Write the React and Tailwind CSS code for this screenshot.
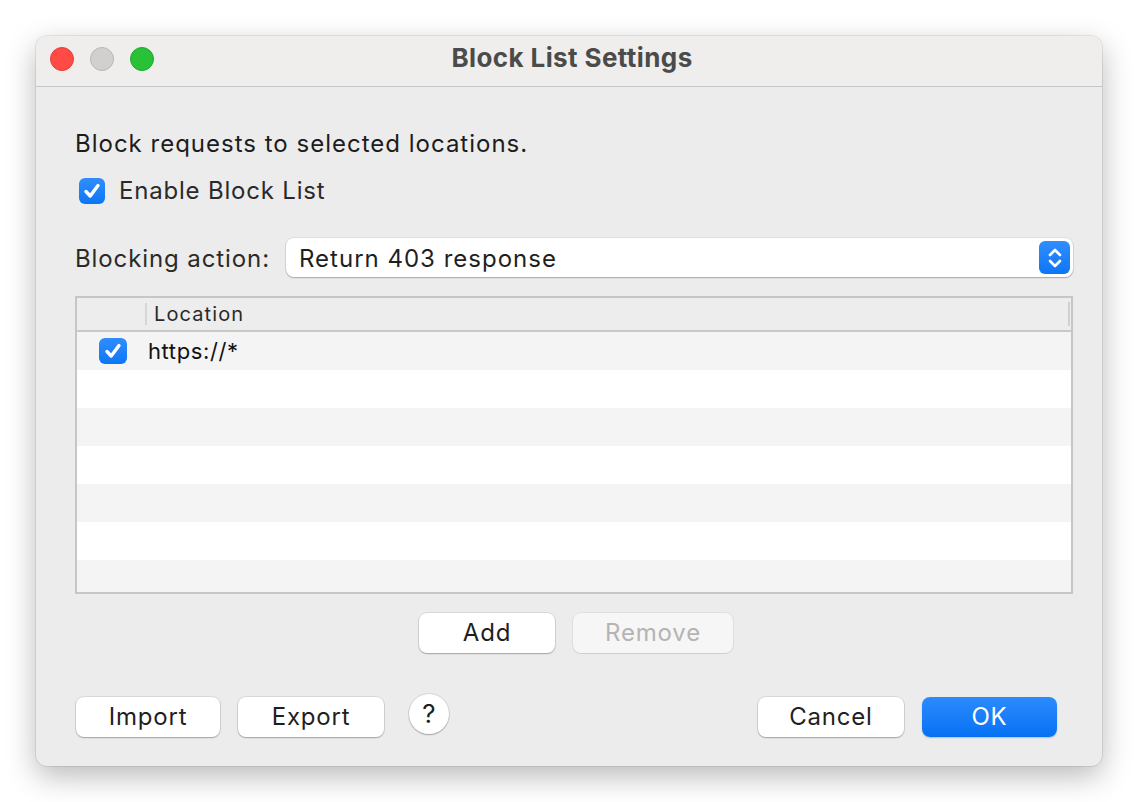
const font = { fontFamily: 'Inter, "Noto Sans", sans-serif' }

function MacButton({ children, className = '', disabled = false }) {
  return (
    <button
      className={`h-[40px] rounded-[8px] text-[24px] leading-none tracking-[0.8px] ${
        disabled
          ? 'bg-[#f6f6f6] text-[#b4b4b4] shadow-[0_0_0_1px_rgba(0,0,0,0.05),0_1px_1px_rgba(0,0,0,0.08)]'
          : 'bg-white text-[#1f1f1f] shadow-[0_0_0_1px_rgba(0,0,0,0.08),0_1px_1.5px_rgba(0,0,0,0.25)]'
      } ${className}`}
    >
      {children}
    </button>
  )
}

function BlueCheck({ className = '' }) {
  return (
    <div className={`flex items-center justify-center rounded-[6px] bg-gradient-to-b from-[#2f8dff] to-[#0a76f5] ${className}`}>
      <svg width="22" height="22" viewBox="0 0 22 22" fill="none" stroke="white" strokeWidth="3.4" strokeLinecap="round" strokeLinejoin="round">
        <path d="M5 11.5 L9.2 16 L17 5.5" />
      </svg>
    </div>
  )
}

export default function App() {
  const rows = [0, 1, 2, 3, 4, 5, 6]

  return (
    <div className="w-[1138px] h-[802px] bg-white pt-[36px] pl-[36px]" style={font}>
      <div className="w-[1066px] h-[730px] rounded-[11px] overflow-hidden bg-[#ececec] shadow-[0_10px_30px_rgba(0,0,0,0.28),0_0_0_1px_rgba(0,0,0,0.08)]">
        {/* title bar */}
        <div className="h-[51px] bg-[#efeeec] border-b border-[#c6c6c6] grid grid-cols-[1fr_auto_1fr] items-center">
          <div className="flex items-center gap-[16px] pl-[14px] mb-[4px]">
            <span className="w-[24px] h-[24px] rounded-full bg-[#ff4a45] border border-[#e0403b]" />
            <span className="w-[24px] h-[24px] rounded-full bg-[#d1d0ce] border border-[#b8b7b5]" />
            <span className="w-[24px] h-[24px] rounded-full bg-[#28c138] border border-[#20a82e]" />
          </div>
          <div className="mb-[8px] ml-[6px] text-[26px] font-bold text-[#4b4b4b] tracking-[0.4px]">Block List Settings</div>
          <div />
        </div>

        {/* body */}
        <div className="pl-[39px] pr-[29px]">
          <p className="mt-[43px] text-[24px] leading-[28px] text-[#1c1c1c] tracking-[1px]">
            Block requests to selected locations.
          </p>

          <div className="mt-[19px] flex items-center gap-[14px] pl-[4px]">
            <BlueCheck className="w-[26px] h-[26px]" />
            <span className="text-[24px] leading-[28px] text-[#2a2a2a] tracking-[0.8px]">Enable Block List</span>
          </div>

          <div className="mt-[33px] flex items-center gap-[16px]">
            <span className="mt-[2px] text-[24px] leading-[28px] text-[#2a2a2a] tracking-[0.9px]">Blocking action:</span>
            <div className="flex-1 h-[39px] rounded-[8px] bg-white shadow-[0_0_0_1px_rgba(0,0,0,0.06),0_1px_1.5px_rgba(0,0,0,0.25)] flex items-center justify-between pl-[13px] pr-[3px]">
              <span className="mt-[2px] text-[24px] text-[#1f1f1f] tracking-[1px]">Return 403 response</span>
              <div className="w-[31px] h-[33px] rounded-[6px] bg-gradient-to-b from-[#2f8dff] to-[#0a76f5] flex items-center justify-center">
                <svg width="16" height="24" viewBox="0 0 16 24" fill="none" stroke="white" strokeWidth="2.6" strokeLinecap="round" strokeLinejoin="round">
                  <path d="M3 9 L8 4 L13 9" />
                  <path d="M3 15 L8 20 L13 15" />
                </svg>
              </div>
            </div>
          </div>

          {/* table */}
          <div className="mt-[19px] w-[998px] h-[298px] border-2 border-[#c6c6c6] bg-white overflow-hidden">
            <div className="h-[34px] bg-[#ededed] border-b-2 border-[#c9c9c9] flex items-center">
              <div className="w-[70px] h-[22px] border-r-2 border-[#d6d6d6]" />
              <span className="pl-[7px] text-[20px] text-[#2a2a2a] tracking-[1.1px] flex-1">Location</span>
              <div className="w-[2px] h-[24px] bg-[#d0d0d0] mr-[1px]" />
            </div>
            {rows.map((r) => (
              <div key={r} className={`h-[38px] flex items-center ${r % 2 === 0 ? 'bg-[#f4f4f4]' : 'bg-white'}`}>
                {r === 0 && (
                  <>
                    <div className="w-[71px] flex justify-end pr-[21px]">
                      <BlueCheck className="w-[28px] h-[26px]" />
                    </div>
                    <span className="text-[22px] text-[#111] tracking-[0.6px]">https://*</span>
                  </>
                )}
              </div>
            ))}
          </div>

          <div className="w-[998px] mt-[19px] flex justify-center gap-[18px] pl-[4px]">
            <MacButton className="w-[136px]">Add</MacButton>
            <MacButton className="w-[160px]" disabled>Remove</MacButton>
          </div>

          <div className="mt-[44px] flex items-center pr-[16px]">
            <MacButton className="w-[144px] ml-[1px]">Import</MacButton>
            <MacButton className="w-[146px] ml-[18px]">Export</MacButton>
            <button className="ml-[25px] -mt-[6px] w-[40px] h-[40px] rounded-full bg-white text-[26px] leading-none text-[#1f1f1f] shadow-[0_0_0_1px_rgba(0,0,0,0.08),0_1px_1.5px_rgba(0,0,0,0.25)]">
              ?
            </button>
            <div className="flex-1" />
            <MacButton className="w-[146px]">Cancel</MacButton>
            <button className="ml-[18px] w-[135px] h-[40px] rounded-[8px] text-[24px] tracking-[0.8px] text-white bg-gradient-to-b from-[#2a8bff] to-[#0471f4] shadow-[0_1px_1.5px_rgba(0,0,0,0.2)]">
              OK
            </button>
          </div>
        </div>
      </div>
    </div>
  )
}
